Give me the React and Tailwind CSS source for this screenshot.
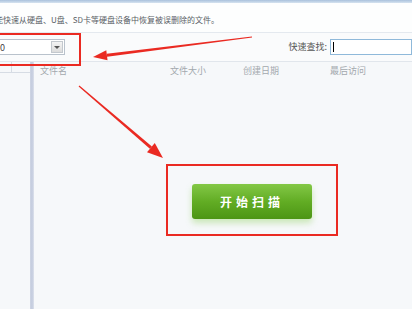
import React from 'react';

const font = { fontFamily: '"Noto Sans CJK SC", "Noto Sans", sans-serif' };

const columns = [
  { label: '文件名', w: 'w-[130px]' },
  { label: '文件大小', w: 'w-[73px]' },
  { label: '创建日期', w: 'w-[87px]' },
  { label: '最后访问', w: 'flex-1' },
];

const Arrows = () => (
  <svg className="pointer-events-none absolute inset-0" width="412" height="309" viewBox="0 0 412 309">
    {/* arrow to the drive dropdown */}
    <polygon points="252.08,37.6 251.92,36.4 106.7,53.66 107.1,56.84" fill="#ea2a22" />
    <polygon points="93,57 107.5,60.2 106.3,50.3" fill="#ea2a22" />
    {/* arrow to the scan button */}
    <polygon points="78.6,86.46 79.4,85.54 151.94,146.39 149.86,148.81" fill="#ea2a22" />
    <polygon points="163,158 147,152.2 154.8,143" fill="#ea2a22" />
  </svg>
);

const App = () => {
  return (
    <div className="relative h-[309px] w-[412px] overflow-hidden bg-[#f6f8fa]" style={font}>
      {/* window top edge */}
      <div className="h-[3px] bg-gradient-to-b from-[#a9c1dc] to-[#d6e3f0]" />

      {/* hint line */}
      <div className="flex h-[30px] items-center border-b border-[#e4e9ef] bg-[#fdfefe] pt-[4px]">
        <span className="ml-[-5px] whitespace-nowrap text-[8px] text-[#5a5f66]">
          能快速从硬盘、U盘、SD卡等硬盘设备中恢复被误删除的文件。
        </span>
      </div>

      {/* toolbar */}
      <div className="flex h-[29px] items-center border-b border-[#e1e6ec] bg-[#fafbfc]">
        <div className="ml-[-2px] flex h-[16px] w-[67px] items-center justify-between border border-[#b9c2cc] bg-white pr-[1px]">
          <span className="pl-[1px] text-[9px] leading-none text-[#444]">0</span>
          <div className="flex h-[12px] w-[12px] items-center justify-center border border-[#c3c8ce] bg-gradient-to-b from-[#f4f4f4] to-[#dcdcdc]">
            <div className="h-0 w-0 border-x-[3px] border-t-[3px] border-x-transparent border-t-[#555]" />
          </div>
        </div>
        <div className="ml-auto flex items-center">
          <span className="mr-[3px] text-[9px] text-[#555]">快速查找:</span>
          <div className="flex h-[16px] w-[82px] items-center border border-[#8fb9da] bg-white pl-[2px]">
            <div className="h-[10px] w-px bg-black" />
          </div>
        </div>
      </div>

      {/* main area */}
      <div className="flex h-[247px]">
        <div className="w-[30px]">
          <div className="flex h-[11px] border-b border-[#d6dce4]">
            <div className="w-[12px] border-r border-[#d6dce4]" />
          </div>
        </div>
        <div className="w-[4px] bg-gradient-to-r from-[#cfd6e4] via-[#c3cbde] to-[#dde2ec]" />
        <div className="flex flex-1 flex-col">
          <div className="flex h-[17px] items-center pl-[6px] pt-[1px] text-[9px] text-[#a3a8ae]">
            {columns.map((c) => (
              <span key={c.label} className={c.w}>{c.label}</span>
            ))}
          </div>
          <div className="flex flex-1 pl-[158px] pt-[105px]">
            <button className="h-[35px] w-[120px] rounded-[3px] bg-gradient-to-b from-[#83c845] via-[#62ad24] to-[#4c9514] text-[12px] font-semibold tracking-[4px] text-white shadow-[0_4px_6px_rgba(120,200,60,0.35)]">
              开始扫描
            </button>
          </div>
        </div>
      </div>

      {/* annotation boxes */}
      <div className="pointer-events-none absolute left-[-2px] top-[33px] h-[33px] w-[83px] border-2 border-[#ea2a22]" />
      <div className="pointer-events-none absolute left-[166px] top-[164px] h-[72px] w-[172px] border-2 border-[#ea2a22]" />
      <Arrows />
    </div>
  );
};

export default App;
